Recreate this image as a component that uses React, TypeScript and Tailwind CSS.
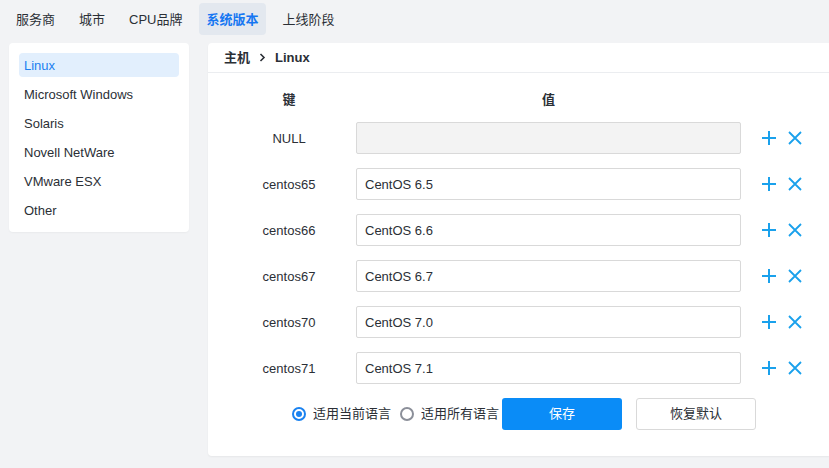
import React, {useState} from "react";

const tabs = ["服务商", "城市", "CPU品牌", "系统版本", "上线阶段"]
const systems = ["Linux", "Microsoft Windows", "Solaris", "Novell NetWare", "VMware ESX", "Other"]
const rows = [
    {key: "NULL", value: "", disabled: true},
    {key: "centos65", value: "CentOS 6.5"},
    {key: "centos66", value: "CentOS 6.6"},
    {key: "centos67", value: "CentOS 6.7"},
    {key: "centos70", value: "CentOS 7.0"},
    {key: "centos71", value: "CentOS 7.1"},
]

function PlusIcon() {
    return (
        <svg width="16" height="16" viewBox="0 0 16 16" fill="none" stroke="#1aa1ec" strokeWidth="2">
            <path d="M8 1v14M1 8h14"/>
        </svg>
    )
}

function CloseIcon() {
    return (
        <svg width="16" height="16" viewBox="0 0 16 16" fill="none" stroke="#1aa1ec" strokeWidth="1.8">
            <path d="M2 2l12 12M14 2L2 14"/>
        </svg>
    )
}

export default function App() {

    const [tab, setTab] = useState("系统版本")
    const [system, setSystem] = useState("Linux")
    const [scope, setScope] = useState("current")

    return (
        <div className="w-[829px] h-[468px] overflow-hidden bg-[#f2f3f5] text-[13px] text-[#2b2f36]"
             style={{fontFamily: '"Liberation Sans", "Noto Sans CJK SC", sans-serif'}}>
            <div className="flex items-center gap-[10px] pl-[9px] pt-[3px] h-[35px]">
                {tabs.map(t => (
                    <button key={t} onClick={() => setTab(t)}
                            className={"h-[32px] px-[7px] pt-[1px] rounded-[4px] " + (t === tab ? "bg-[#e3e8ef] text-[#1677f2] font-bold" : "")}>
                        {t}
                    </button>
                ))}
            </div>

            <div className="flex items-start mt-[8px]">
                <div className="ml-[9px] w-[180px] bg-white rounded-[4px] p-[10px] flex flex-col gap-[5px] shadow-[0_1px_2px_rgba(0,0,0,0.04)]">
                    {systems.map(s => (
                        <div key={s} onClick={() => setSystem(s)}
                             className={"h-[24px] leading-[25px] pl-[5px] rounded-[4px] cursor-pointer " + (s === system ? "bg-[#e2effd] text-[#1a7ff0]" : "")}>
                            {s}
                        </div>
                    ))}
                </div>

                <div className="ml-[19px] flex-1 h-[413px] bg-white rounded-tl-[4px] rounded-bl-[4px] shadow-[0_1px_2px_rgba(0,0,0,0.05)]">
                    <div className="h-[30px] border-b border-[#ebedf0] flex items-center pl-[16px] font-bold">
                        <span>主机</span>
                        <svg className="mx-[9px]" width="7" height="9" viewBox="0 0 7 9" fill="none" stroke="#2b2f36" strokeWidth="1.6">
                            <path d="M1.5 1l3.5 3.5L1.5 8"/>
                        </svg>
                        <span>Linux</span>
                    </div>

                    <div className="pl-[14px]">
                        <div className="flex items-center h-[32px] mt-[11px] font-bold">
                            <div className="w-[134px] text-center">键</div>
                            <div className="w-[385px] text-center">值</div>
                        </div>

                        <div className="flex flex-col gap-[14px] mt-[6px]">
                            {rows.map(r => (
                                <div key={r.key} className="flex items-center h-[32px]">
                                    <div className="w-[134px] text-center pt-[1px]">{r.key}</div>
                                    <input
                                        defaultValue={r.value}
                                        disabled={r.disabled}
                                        className={"w-[385px] h-[32px] border border-[#d9d9d9] rounded-[2px] px-[8px] text-[13px] text-[#2b2f36] outline-none " + (r.disabled ? "bg-[#f3f3f3]" : "bg-white")}
                                    />
                                    <div className="flex items-center ml-[20px] gap-[10px]">
                                        <PlusIcon/>
                                        <CloseIcon/>
                                    </div>
                                </div>
                            ))}
                        </div>
                    </div>

                    <div className="flex items-center mt-[14px] pl-[84px]">
                        <label className="flex items-center gap-[7px] cursor-pointer" onClick={() => setScope("current")}>
                            <span className={"w-[14px] h-[14px] rounded-full border-2 flex items-center justify-center " + (scope === "current" ? "border-[#1a82f0]" : "border-[#8b8f99]")}>
                                {scope === "current" && <span className="w-[6px] h-[6px] rounded-full bg-[#1a82f0]"/>}
                            </span>
                            适用当前语言
                        </label>
                        <label className="flex items-center gap-[7px] ml-[9px] cursor-pointer" onClick={() => setScope("all")}>
                            <span className={"w-[14px] h-[14px] rounded-full border-2 flex items-center justify-center " + (scope === "all" ? "border-[#1a82f0]" : "border-[#8b8f99]")}>
                                {scope === "all" && <span className="w-[6px] h-[6px] rounded-full bg-[#1a82f0]"/>}
                            </span>
                            适用所有语言
                        </label>
                        <button className="ml-[3px] w-[120px] h-[32px] rounded-[3px] bg-[#0a8cf7] text-white">保存</button>
                        <button className="ml-[14px] w-[120px] h-[32px] rounded-[3px] bg-white border border-[#d9d9d9]">恢复默认</button>
                    </div>
                </div>
            </div>
        </div>
    )
}
